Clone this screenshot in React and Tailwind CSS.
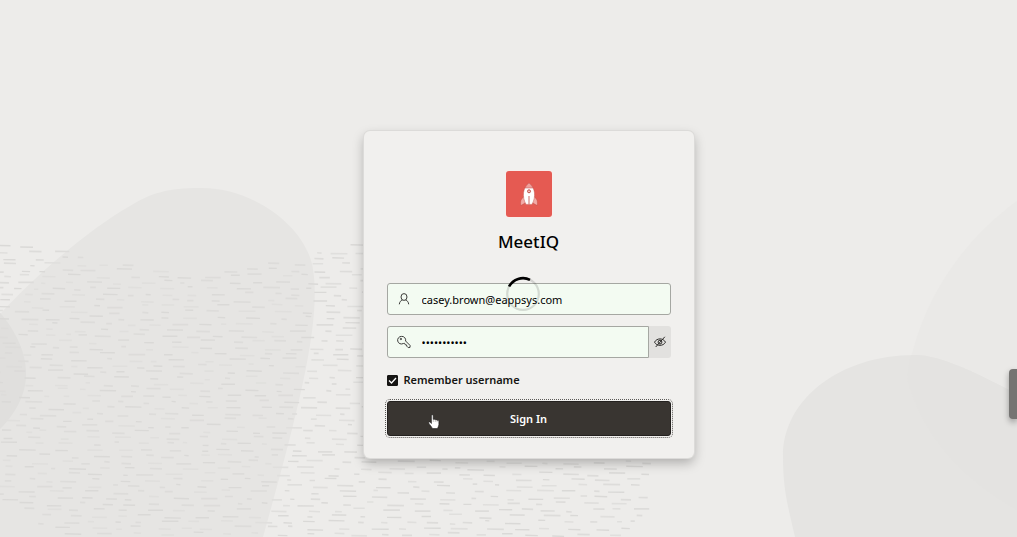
import React from "react";

function buildDashes() {
  let seed = 41;
  const random = () => {
    seed = (seed * 16807) % 2147483647;
    return seed / 2147483647;
  };
  const groups = ["", "", ""];
  for (let y = 240; y < 540; y += 6) {
    let x = -14 + random() * 20;
    while (x < 662) {
      const length = 4 + random() * 13;
      const jitter = (random() - 0.5) * 4;
      const top =
        x < 165 ? 240 + x * 0.19 : x < 230 ? 271 : 271 - (x - 230) * 0.22;
      const bottom = 500 + x * 0.75;
      const right = 660 - Math.max(0, y - 480) * 0.2;
      if (y + jitter > top && y < bottom && x + length < right) {
        const slope = random() * 0.4;
        groups[Math.floor(random() * 3)] +=
          `M${x.toFixed(1)} ${(y + jitter).toFixed(1)}l${length.toFixed(1)} ${slope.toFixed(1)}`;
      }
      x += length + 7 + random() * 16;
    }
  }
  return groups;
}

const dashes = buildDashes();

function Backdrop() {
  return (
    <svg
      aria-hidden="true"
      className="absolute inset-0 h-full w-full"
      viewBox="0 0 1017 537"
      preserveAspectRatio="xMidYMid slice"
      fill="none"
    >
      <path
        d="M1017 201C965 239 929 291 913 350C905 376 906 382 911 391C927 440 967 482 1017 510Z"
        fill="#eae9e7"
      />
      <path
        d="M-5 320C28 282 86 231 130 206C151 193 168 188 200 188C250 187 302 223 312 264C323 315 300 405 263 537H-5Z"
        fill="#e6e5e3"
      />
      <path
        d="M-4 308C10 323 26 347 26 374C26 397 13 417 -4 433Z"
        fill="#e0dfdd"
      />
      <path
        d="M795 537C788 506 783 491 783 456C783 400 839 355 915 355C941 355 978 374 1017 394V537Z"
        fill="#e5e4e2"
      />
      <path
        d="M911 391C927 440 967 482 1017 510V394C978 374 941 355 915 355H911C907 370 906 382 911 391Z"
        fill="#e4e3e1"
      />
      <path d={dashes[0]} stroke="#e0dfdd" strokeWidth="1.6" />
      <path d={dashes[1]} stroke="#dad9d7" strokeWidth="1.4" />
      <path d={dashes[2]} stroke="#dddcda" strokeWidth="1.7" />
    </svg>
  );
}

function RocketLogo() {
  return (
    <div className="flex size-[46px] items-center justify-center rounded-[3px] bg-[#e55a52] ring-1 ring-[#f8eeeb]">
      <svg className="size-6" viewBox="0 0 24 24" aria-hidden="true">
        <path d="M7.6 14L4.6 17C3.4 19 3.4 21 3.8 23.6L9 20.5Z" fill="#f3aaa6" stroke="#b8443d" strokeWidth=".4" />
        <path d="M16.4 14L19.4 17C20.6 19 20.6 21 20.2 23.6L15 20.5Z" fill="#f3aaa6" stroke="#b8443d" strokeWidth=".4" />
        <path d="M12 1C5.4 6 5 15 9 22.4H15C19 15 18.6 6 12 1Z" fill="#fff" stroke="#b8443d" strokeWidth=".4" />
        <path d="M12 1C10.2 2.5 8.9 4.2 8.2 6H15.8C15.1 4.2 13.8 2.5 12 1Z" fill="#f1a09b" stroke="#c64f48" strokeWidth=".5" />
        <circle cx="12" cy="9.3" r="1.5" fill="#f5c3c0" stroke="#b8443d" strokeWidth=".9" />
        <path d="M12 14V22.4" stroke="#c85a54" strokeWidth=".9" />
      </svg>
    </div>
  );
}

function PersonIcon() {
  return (
    <svg className="size-3 shrink-0" viewBox="0 0 12 12" fill="none" stroke="#3c3c3a" strokeWidth="1" aria-hidden="true">
      <ellipse cx="6" cy="4" rx="3" ry="3.4" />
      <path d="M1.3 11.3C1.6 8.8 2.7 7.5 4.4 7.2M10.7 11.3C10.4 8.8 9.3 7.5 7.6 7.2" />
    </svg>
  );
}

function KeyIcon() {
  return (
    <svg className="size-3 shrink-0 overflow-visible" viewBox="0 0 12 12" fill="none" stroke="#3c3c3a" strokeWidth="1" strokeLinejoin="round" aria-hidden="true">
      <path d="M3.6 .4A3.8 3.8 0 1 0 5.3 7.5L6.6 7.3L7.2 8.7L8.5 8.9L8.8 10.2L10.2 11.6L12 11.4L12.1 9.5L7.6 5A3.8 3.8 0 0 0 3.6 .4Z" />
      <circle cx="2.9" cy="3" r=".7" />
    </svg>
  );
}

function EyeOffIcon() {
  return (
    <svg className="h-3 w-3" viewBox="0 0 12 12" fill="none" stroke="#2b2a28" strokeWidth="1" aria-hidden="true">
      <path d="M.5 6.2C2.8 1.8 9.2 1.8 11.5 6.2C9.2 10.4 2.8 10.4 .5 6.2Z" />
      <circle cx="6" cy="6.1" r="1.9" />
      <path d="M1.7 11L10.8 .8" />
    </svg>
  );
}

function Spinner() {
  return (
    <svg
      role="status"
      aria-label="Signing in"
      className="pointer-events-none absolute top-[145px] left-[141px] size-9"
      viewBox="0 0 36 36"
      fill="none"
    >
      <circle cx="18" cy="18" r="15.8" stroke="#000" strokeOpacity=".13" strokeWidth="2.2" />
      <path d="M4.1 10.5A15.8 15.8 0 0 1 25 3.8" stroke="#000" strokeWidth="2.6" />
    </svg>
  );
}

function HandPointer() {
  return (
    <svg className="pointer-events-none absolute top-3 left-10 h-4 w-3" viewBox="0 0 12 16" aria-hidden="true">
      <path
        d="M3.4 1.6C3.4 .5 5.2 .5 5.2 1.6V5.4L6 5.2C6.8 5 7.2 5.4 7.3 5.8C8.2 5.4 8.9 5.8 9.1 6.4C10.2 6.1 10.9 6.7 10.9 7.6V10.5C10.9 12.2 9.8 13 9.6 14.6H4.4C4 13 1.8 11 .8 9.2C.3 8 1.5 7.5 2.3 8.3L3.4 9.5Z"
        fill="#fff"
        stroke="#1b1a19"
        strokeWidth=".6"
      />
      <path d="M5.3 8V5.5M7.3 8V6M9.1 8.2V6.6" stroke="#8c8a87" strokeWidth=".5" />
    </svg>
  );
}

export default function App() {
  return (
    <div className="relative min-h-screen overflow-hidden bg-[#edecea] font-['Noto_Sans',sans-serif] text-[11px] leading-5 text-[#161513]">
      <Backdrop />
      <main className="relative flex min-h-screen items-start justify-center pt-[131px] pb-12 pl-10">
        <form
          onSubmit={(event) => event.preventDefault()}
          className="relative flex w-full max-w-[330px] flex-col rounded-md bg-[#f1f0ee] px-[23px] pt-10 pb-[22px] shadow-[0_0_0_1px_#dcdbd9,0_5px_12px_#00000045]"
        >
          <header className="flex flex-col items-center gap-3">
            <RocketLogo />
            <h1 className="text-[17px] leading-[26px] font-medium text-black">MeetIQ</h1>
          </header>

          <div className="mt-7 flex h-8 items-center gap-3 rounded-[3px] border border-[#a5a7a2] bg-[#f3fbf2] px-[10px]">
            <PersonIcon />
            <input
              type="text"
              aria-label="Username"
              defaultValue="casey.brown@eappsys.com"
              className="h-full w-full min-w-0 bg-transparent text-black outline-none"
            />
          </div>

          <div className="mt-[11px] flex h-8">
            <div className="flex min-w-0 flex-1 items-center gap-3 rounded-l-[3px] border border-[#a5a7a2] bg-[#f3fbf2] px-[10px]">
              <KeyIcon />
              <input
                type="password"
                aria-label="Password"
                defaultValue="abcdefghijk"
                className="h-full w-full min-w-0 bg-transparent text-black outline-none"
              />
            </div>
            <button
              type="button"
              aria-label="Show password"
              className="flex w-[22px] items-center justify-center rounded-r-[3px] bg-[#e2e1df]"
            >
              <EyeOffIcon />
            </button>
          </div>

          <label className="mt-3 flex h-5 items-center gap-[6px] font-semibold">
            <span className="relative flex size-[11px]">
              <input
                type="checkbox"
                defaultChecked
                className="peer size-[11px] appearance-none rounded-[1px] border border-[#161513] checked:bg-[#161513]"
              />
              <svg className="pointer-events-none absolute inset-0 hidden size-[11px] peer-checked:block" viewBox="0 0 11 11" fill="none" aria-hidden="true">
                <path d="M2 5.5L4.5 8L9 3" stroke="#fff" strokeWidth="1.3" />
              </svg>
            </span>
            Remember username
          </label>

          <button
            type="submit"
            className="relative mt-[11px] h-[35px] rounded-[3px] border border-[#24211f] bg-[#393531] font-semibold text-white outline-1 outline-offset-1 outline-[#5c5a57] outline-dotted"
          >
            Sign In
            <HandPointer />
          </button>
          <Spinner />
        </form>
      </main>
      <button
        type="button"
        aria-label="Open side panel"
        className="absolute right-0 top-[369px] h-[50px] w-2 rounded-l-[4px] bg-[#757472] shadow-[0_3px_6px_#00000055]"
      />
    </div>
  );
}
